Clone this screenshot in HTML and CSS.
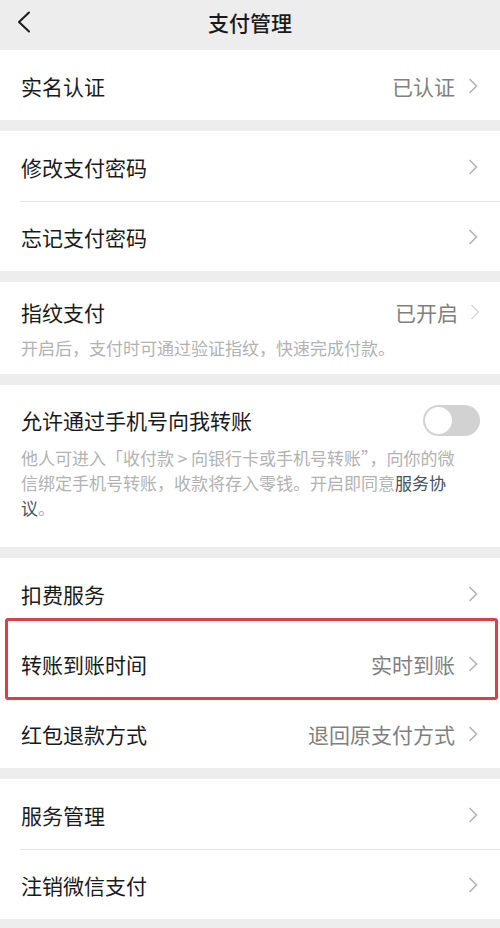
FILE: index.html
```html
<!DOCTYPE html>
<html lang="zh-CN">
    <head>
        <meta charset="utf-8">
        <meta name="viewport" content="width=device-width, initial-scale=1">
        <title>支付管理</title>
        <link rel="stylesheet" href="styles.css">
    </head>
    <body>
        <header class="nav">
            <svg class="nav-back" width="14" height="22" viewBox="0 0 14 22">
                <polyline points="12,1.5 2,11 12,20.5" />
            </svg>
            <h1 class="nav-title">支付管理</h1>
            <span></span>
        </header>

        <section class="group">
            <div class="row">
                <span class="label">实名认证</span>
                <span class="value">已认证</span>
                <svg class="arrow" width="10" height="16" viewBox="0 0 10 16"><polyline points="1.5,1 8.5,8 1.5,15" /></svg>
            </div>
        </section>

        <section class="group lines">
            <div class="row">
                <span class="label">修改支付密码</span>
                <svg class="arrow" width="10" height="16" viewBox="0 0 10 16"><polyline points="1.5,1 8.5,8 1.5,15" /></svg>
            </div>
            <div class="row">
                <span class="label">忘记支付密码</span>
                <svg class="arrow" width="10" height="16" viewBox="0 0 10 16"><polyline points="1.5,1 8.5,8 1.5,15" /></svg>
            </div>
        </section>

        <section class="group block finger">
            <div class="block-head">
                <span class="label">指纹支付</span>
                <span class="value">已开启</span>
                <svg class="arrow faint" width="10" height="16" viewBox="0 0 10 16"><polyline points="1.5,1 8.5,8 1.5,15" /></svg>
            </div>
            <p class="note">开启后，支付时可通过验证指纹，快速完成付款。</p>
        </section>

        <section class="group block phone">
            <div class="block-head">
                <span class="label">允许通过手机号向我转账</span>
                <span class="switch"><span class="knob"></span></span>
            </div>
            <p class="note note-long">他人可进入「收付款 &gt; 向银行卡或手机号转账”，向你的微信绑定手机号转账，收款将存入零钱。开启即同意<a href="#" class="link">服务协</a><a href="#" class="link">议</a>。</p>
        </section>

        <section class="group marked">
            <div class="row">
                <span class="label">扣费服务</span>
                <svg class="arrow" width="10" height="16" viewBox="0 0 10 16"><polyline points="1.5,1 8.5,8 1.5,15" /></svg>
            </div>
            <div class="row">
                <span class="label">转账到账时间</span>
                <span class="value">实时到账</span>
                <svg class="arrow" width="10" height="16" viewBox="0 0 10 16"><polyline points="1.5,1 8.5,8 1.5,15" /></svg>
            </div>
            <div class="row">
                <span class="label">红包退款方式</span>
                <span class="value">退回原支付方式</span>
                <svg class="arrow" width="10" height="16" viewBox="0 0 10 16"><polyline points="1.5,1 8.5,8 1.5,15" /></svg>
            </div>
            <div class="highlight"></div>
        </section>

        <section class="group lines">
            <div class="row">
                <span class="label">服务管理</span>
                <svg class="arrow" width="10" height="16" viewBox="0 0 10 16"><polyline points="1.5,1 8.5,8 1.5,15" /></svg>
            </div>
            <div class="row">
                <span class="label">注销微信支付</span>
                <svg class="arrow" width="10" height="16" viewBox="0 0 10 16"><polyline points="1.5,1 8.5,8 1.5,15" /></svg>
            </div>
        </section>
    </body>
</html>
```

FILE: styles.css
```css
body {
    margin: 0px;
    padding: 0px;
    background: #ededed;
    font-family: "Noto Sans CJK SC", "Noto Sans", sans-serif;
    color: #1a1a1a;
}

.nav {
    display: grid;
    grid-template-columns: 60px 1fr 60px;
    align-items: center;
    height: 50px;
    padding-bottom: 6px;
    box-sizing: border-box;
}

.nav-back {
    margin-left: 17px;
    fill: none;
    stroke: #1a1a1a;
    stroke-width: 2;
    stroke-linecap: round;
    stroke-linejoin: round;
}

.nav-title {
    margin: 0px;
    text-align: center;
    font-size: 21px;
    font-weight: 500;
    line-height: 30px;
}

.group {
    background: white;
    margin-bottom: 11px;
}

.row {
    display: flex;
    align-items: center;
    height: 70px;
    padding: 1px 22px 0px 21px;
    box-sizing: border-box;
}

/* hairline between rows, starts at the text edge */
.lines .row + .row {
    background: linear-gradient(#e6e6e6, #e6e6e6) 20px 0 / 100% 1px no-repeat;
}

.label {
    flex: 1;
    font-size: 21px;
    line-height: 30px;
}

.value {
    font-size: 21px;
    line-height: 30px;
    color: #7f7f7f;
    margin-right: 13px;
}

.arrow {
    flex: none;
    fill: none;
    stroke: #b4b4b4;
    stroke-width: 1.6;
}

.arrow.faint {
    stroke: #dadada;
}

.block {
    padding: 15px 20px 14px 21px;
}

.block-head {
    display: flex;
    align-items: center;
    height: 30px;
}

.finger .value {
    margin-right: 12px;
}

.note {
    margin: 9px 0px 0px 0px;
    font-size: 17px;
    line-height: 24px;
    color: #b2b2b2;
}

.phone {
    padding-top: 20px;
    padding-bottom: 27px;
    margin-bottom: 11px;
}

.note-long {
    margin-top: 10px;
    line-height: 25px;
    max-width: 447px;
}

.link {
    color: #4a5160;
    text-decoration: none;
}

.switch {
    display: flex;
    align-items: center;
    width: 57px;
    height: 31px;
    padding: 2px;
    box-sizing: border-box;
    border-radius: 16px;
    background: #d2d2d2;
}

.knob {
    width: 27px;
    height: 27px;
    border-radius: 50%;
    background: white;
}

.marked {
    position: relative;
}

/* red annotation frame drawn over the row */
.highlight {
    position: absolute;
    top: 60px;
    left: 5px;
    width: 493px;
    height: 82px;
    box-sizing: border-box;
    border: 3px solid #d6404f;
    border-radius: 3px;
    pointer-events: none;
}
```
